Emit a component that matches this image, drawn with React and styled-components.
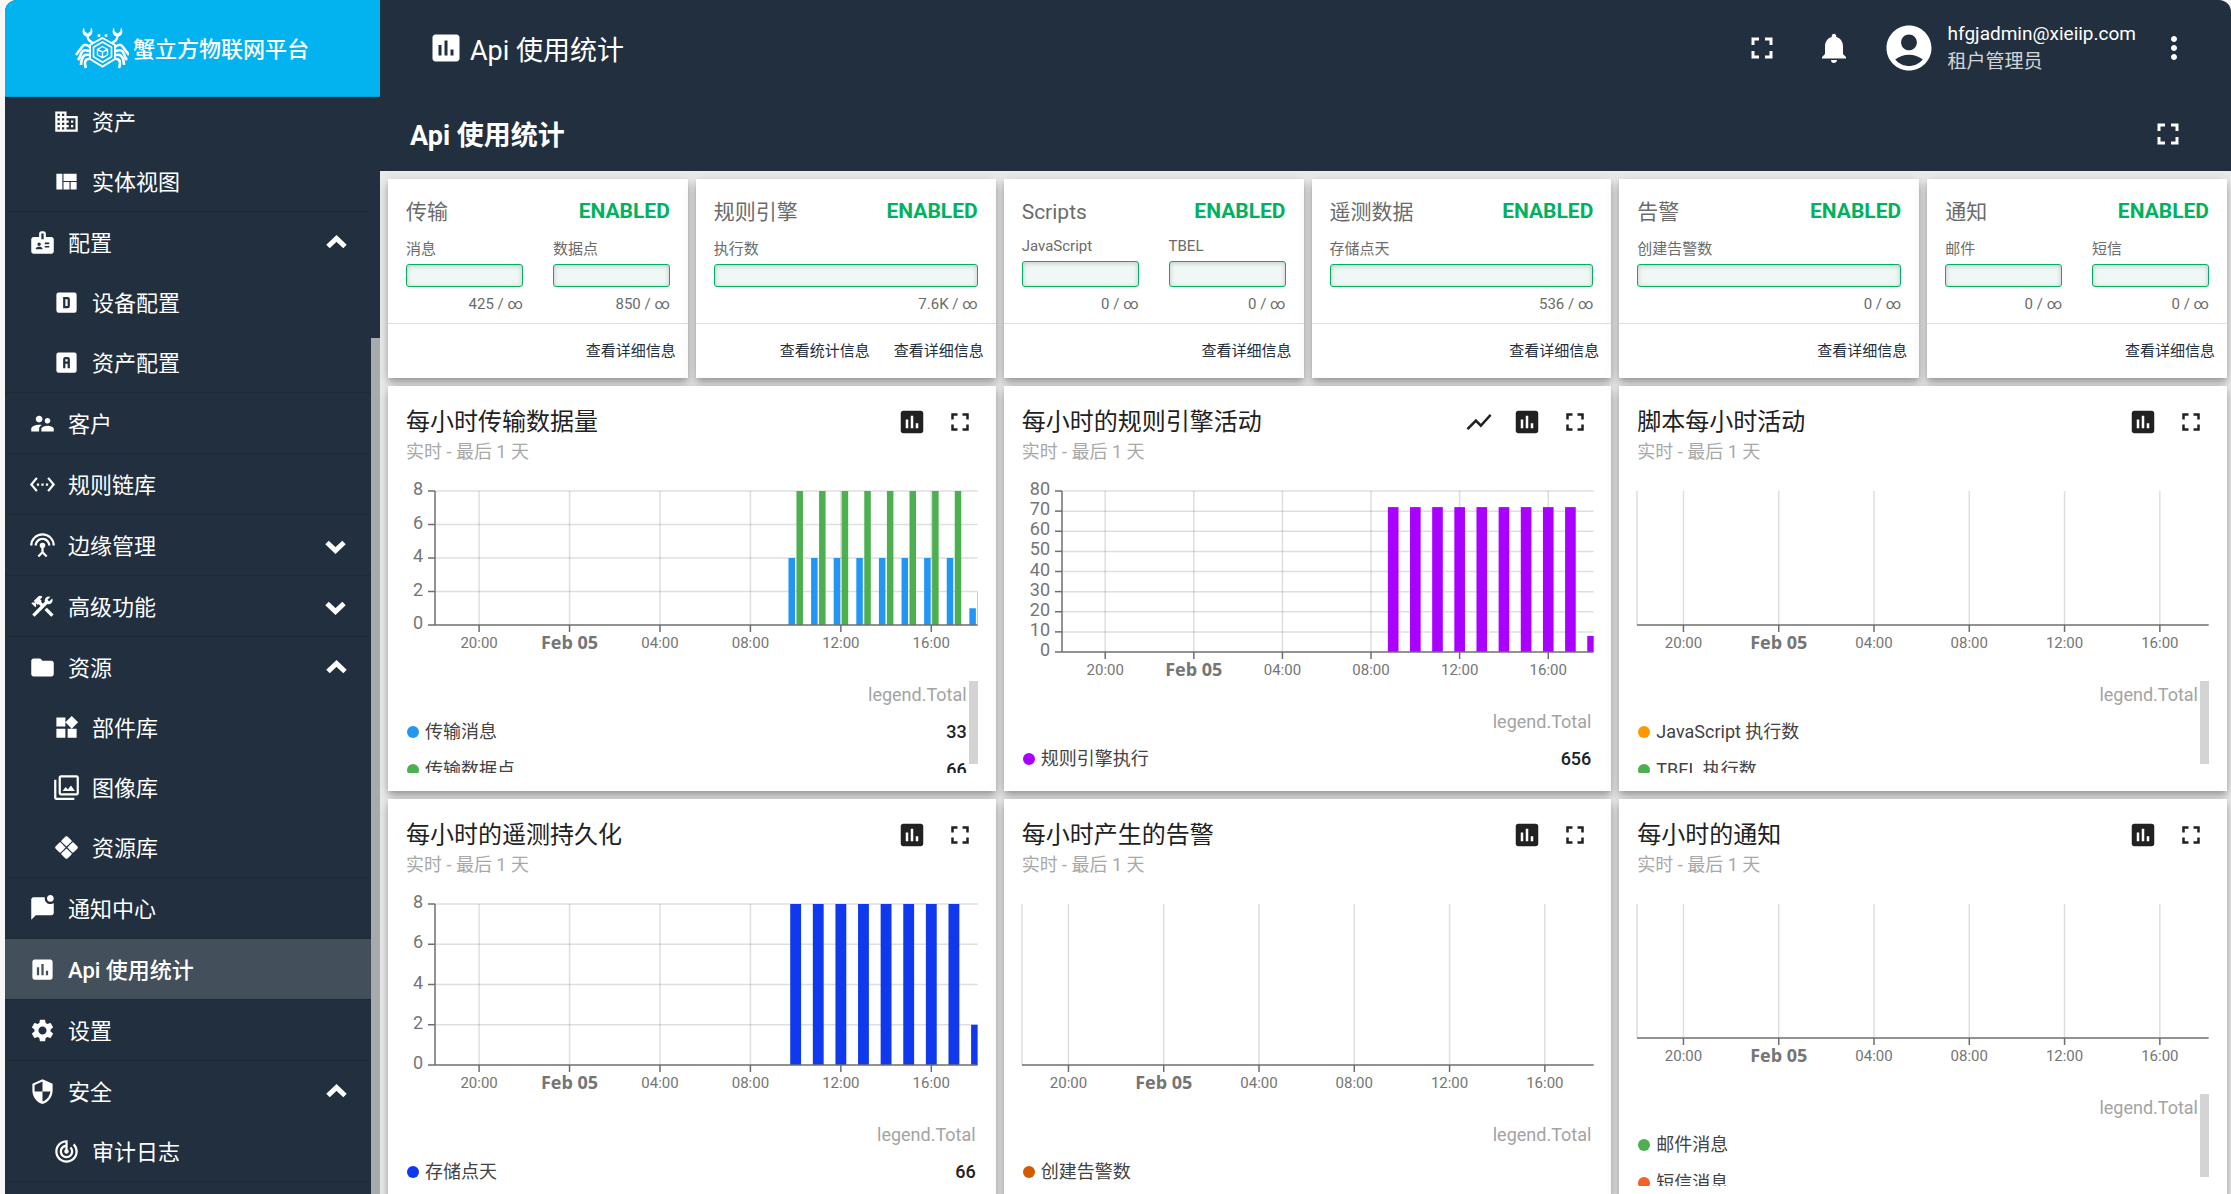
import React from 'react'
import styled, { createGlobalStyle } from 'styled-components'
import {
  MdAccountCircle,
  MdBadge,
  MdConstruction,
  MdDomain,
  MdFilter,
  MdFolder,
  MdFullscreen,
  MdInsertChart,
  MdMoreVert,
  MdNotifications,
  MdSecurity,
  MdSettings,
  MdSettingsEthernet,
  MdSettingsInputAntenna,
  MdShowChart,
  MdSupervisorAccount,
  MdTrackChanges,
  MdViewQuilt,
  MdWidgets,
} from 'react-icons/md'

const GlobalStyle = createGlobalStyle`
  * {
    box-sizing: border-box;
  }
  body {
    margin: 0;
    background: #f7f7f7;
    color: #212121;
    font-family: Roboto, 'Noto Sans CJK SC', sans-serif;
  }
  h1, h2, h3, p, ul {
    margin: 0;
    padding: 0;
    font-weight: 400;
  }
  ul {
    list-style: none;
  }
  button {
    padding: 0;
    border: 0;
    background: none;
    color: inherit;
    font: inherit;
    cursor: pointer;
  }
  a {
    color: inherit;
    text-decoration: none;
  }
  svg {
    display: block;
    flex: none;
  }
`

/* ---------- icons ---------- */

const Svg = ({ d, size = 27 }) => (
  <svg width={size} height={size} viewBox="0 0 24 24" fill="currentColor" aria-hidden="true">
    <path fillRule="evenodd" d={d} />
  </svg>
)

const BOX = 'M5 3H19A2 2 0 0 1 21 5V19A2 2 0 0 1 19 21H5A2 2 0 0 1 3 19V5A2 2 0 0 1 5 3Z'

const DeviceBox = () => <Svg d={`${BOX}M9 7H13A2 2 0 0 1 15 9V15A2 2 0 0 1 13 17H9V7ZM11 9V15H13V9H11Z`} />
const AssetBox = () => <Svg d={`${BOX}M11 7A2 2 0 0 0 9 9V17H11V13H13V17H15V9A2 2 0 0 0 13 7H11ZM11 9H13V11H11V9Z`} />
const Rhombus = () => (
  <Svg d="M12 2c-.4 0-.8.1-1.1.4L7.7 5.6c-.5.5-.5 1 0 1.5L12 11.2l4.300-4.100c.5-.5.5-1 0-1.500l-3.200-3.200C12.800 2.100 12.400 2 12 2ZM7.100 7.700c-.5-.5-1-.5-1.500 0l-3.200 3.200c-.6.6-.6 1.600 0 2.200l3.200 3.200c.5.5 1 .5 1.500 0L11.200 12 7.100 7.700ZM16.900 7.700 12.800 12l4.100 4.300c.5.5 1 .5 1.500 0l3.200-3.200c.6-.6.6-1.600 0-2.200l-3.200-3.200c-.5-.5-1-.5-1.500 0ZM12 12.800l-4.300 4.100c-.5.5-.5 1 0 1.500l3.200 3.200c.6.6 1.600.6 2.200 0l3.200-3.200c.5-.5.5-1 0-1.500L12 12.800Z" />
)
const MessageBadge = () => (
  <Svg d="M22 7V16C22 17.100 21.100 18 20 18H6L2 22V4C2 2.900 2.900 2 4 2H14.100C14 2.300 14 2.700 14 3C14 5.800 16.200 8 19 8C20.100 8 21.200 7.600 22 7ZM16 3C16 4.700 17.300 6 19 6S22 4.700 22 3 20.700 0 19 0 16 1.300 16 3Z" />
)

const Chevron = ({ open }) => (
  <svg width="27" height="27" viewBox="0 0 27 27" fill="none" stroke="currentColor" strokeWidth="5" aria-hidden="true">
    <path d={open ? 'M5 17.500 13.500 9.500 22 17.500' : 'M4 10.500 12.500 18.500 21 10.500'} />
  </svg>
)

const CrabLogo = () => (
  <svg width="54" height="42" viewBox="4 5 54 42" fill="none" stroke="#fff" aria-hidden="true">
    <path strokeWidth="2" d="M31.500 16 44 23v14l-12.500 7.500L19 37V23Z" />
    <path strokeWidth="1.700" d="M31.500 20 40.500 25.200v9.600l-9 5.400-9-5.400v-9.600Z" />
    <path strokeWidth="1.400" d="M31.500 24.500 36.500 27.400v5.400l-5 3-5-3v-5.400ZM26.500 27.400l5 2.800 5-2.800M31.500 30.200v5.600" />
    <g fill="#fff" stroke="none">
      <circle cx="28" cy="13.500" r="1.500" />
      <circle cx="35" cy="13.500" r="1.500" />
      <path d="M13 5.500c-3 4-1 9 3.500 9s6.500-5 3.500-9l-.6 4.100-2.900 2-2.700-2Z" />
      <path d="M43 5.500c-3 4-1 9 3.500 9s6.500-5 3.500-9l-.8 4.100-2.700 2-2.900-2Z" />
    </g>
    <path strokeWidth="2.400" d="M16.500 13c0 5 2 6 5.500 8M46.500 13c0 5-2 6-5.500 8" />
    <path strokeWidth="2.600" d="M19 25c-4-3-6-3-8 0s-4 5-6 8M18 29c-5-2-7 0-8 3s-2 5-3 6M18 33c-4-1-6 1-7 4s-1 4-1 6M18 37c-3 0-4 2-4 4s0 3 1 5" />
    <path strokeWidth="2.600" d="M44 25c4-3 6-3 8 0s4 5 6 8M45 29c5-2 7 0 8 3s2 5 3 6M45 33c4-1 6 1 7 4s1 4 1 6M45 37c3 0 4 2 4 4s0 3-1 5" />
  </svg>
)

/* ---------- data ---------- */

const menu = [
  { children: [
    { label: '资产', icon: <MdDomain size={27} /> },
    { label: '实体视图', icon: <MdViewQuilt size={27} /> },
  ] },
  { label: '配置', icon: <MdBadge size={27} />, open: true, children: [
    { label: '设备配置', icon: <DeviceBox /> },
    { label: '资产配置', icon: <AssetBox /> },
  ] },
  { label: '客户', icon: <MdSupervisorAccount size={27} /> },
  { label: '规则链库', icon: <MdSettingsEthernet size={27} /> },
  { label: '边缘管理', icon: <MdSettingsInputAntenna size={27} />, open: false },
  { label: '高级功能', icon: <MdConstruction size={27} />, open: false },
  { label: '资源', icon: <MdFolder size={27} />, open: true, children: [
    { label: '部件库', icon: <MdWidgets size={27} /> },
    { label: '图像库', icon: <MdFilter size={27} /> },
    { label: '资源库', icon: <Rhombus /> },
  ] },
  { label: '通知中心', icon: <MessageBadge /> },
  { label: 'Api 使用统计', icon: <MdInsertChart size={27} />, active: true },
  { label: '设置', icon: <MdSettings size={27} /> },
  { label: '安全', icon: <MdSecurity size={27} />, open: true, children: [
    { label: '审计日志', icon: <MdTrackChanges size={27} /> },
  ] },
]

const usage = [
  { title: '传输', meters: [['消息', '425'], ['数据点', '850']], links: ['查看详细信息'] },
  { title: '规则引擎', meters: [['执行数', '7.6K']], links: ['查看统计信息', '查看详细信息'] },
  { title: 'Scripts', meters: [['JavaScript', '0'], ['TBEL', '0']], links: ['查看详细信息'] },
  { title: '遥测数据', meters: [['存储点天', '536']], links: ['查看详细信息'] },
  { title: '告警', meters: [['创建告警数', '0']], links: ['查看详细信息'] },
  { title: '通知', meters: [['邮件', '0'], ['短信', '0']], links: ['查看详细信息'] },
]

// values are hourly, counted from the hour in "from"; shift and size are shares of the time axis
const charts = [
  {
    title: '每小时传输数据量',
    max: 8,
    step: 2,
    axis: 29,
    series: [
      { name: '传输消息', color: '#2196f3', total: 33, from: 10, values: [4, 4, 4, 4, 4, 4, 4, 4, 1], shift: -1.32, size: 1.2 },
      { name: '传输数据点', color: '#4caf50', total: 66, from: 10, values: [8, 8, 8, 8, 8, 8, 8, 8, 2], shift: 0.15, size: 1.2 },
    ],
  },
  {
    title: '每小时的规则引擎活动',
    max: 80,
    step: 10,
    axis: 40,
    line: true,
    series: [
      { name: '规则引擎执行', color: '#aa00ff', total: 656, from: 9, values: [72, 72, 72, 72, 72, 72, 72, 72, 72, 8], shift: -1, size: 2 },
    ],
  },
  {
    title: '脚本每小时活动',
    series: [
      { name: 'JavaScript 执行数', color: '#ff9800' },
      { name: 'TBEL 执行数', color: '#4caf50' },
    ],
  },
  {
    title: '每小时的遥测持久化',
    max: 8,
    step: 2,
    axis: 29,
    series: [
      { name: '存储点天', color: '#1039ee', total: 66, from: 10, values: [8, 8, 8, 8, 8, 8, 8, 8, 2], shift: -1, size: 2 },
    ],
  },
  {
    title: '每小时产生的告警',
    series: [{ name: '创建告警数', color: '#d35a00' }],
  },
  {
    title: '每小时的通知',
    series: [
      { name: '邮件消息', color: '#4caf50' },
      { name: '短信消息', color: '#f4602a' },
    ],
  },
]

// the window starts at 18:03 on the day before
const START = -5.95
const at = (hour) => ((hour - START) / 24) * 100
const ticks = [[-4, '20:00'], [0, 'Feb 05'], [4, '04:00'], [8, '08:00'], [12, '12:00'], [16, '16:00']]

/* ---------- components ---------- */

const MenuRow = ({ item, sub }) => {
  const toggles = item.open !== undefined
  return (
    <Row
      as={toggles ? 'button' : 'a'}
      href={toggles ? undefined : '#'}
      aria-expanded={toggles ? item.open : undefined}
      $sub={sub}
      $active={item.active}
    >
      {item.icon}
      <RowLabel>{item.label}</RowLabel>
      {toggles && <Chevron open={item.open} />}
    </Row>
  )
}

const Sidebar = () => (
  <Side>
    <Brand>
      <CrabLogo />
      <BrandName>蟹立方物联网平台</BrandName>
    </Brand>
    <SideBody>
      <Nav>
        <NavList>
          {menu.map((item, i) => (
            <NavGroup key={i}>
              {item.label && <MenuRow item={item} />}
              {item.children && item.children.map((child) => <MenuRow key={child.label} item={child} sub />)}
            </NavGroup>
          ))}
        </NavList>
      </Nav>
      <SideScroll>
        <SideThumb />
      </SideScroll>
    </SideBody>
  </Side>
)

const UsageCard = ({ title, meters, links }) => (
  <Card>
    <UsageBody>
      <UsageHead>
        <UsageTitle>{title}</UsageTitle>
        <Status>ENABLED</Status>
      </UsageHead>
      <Meters>
        {meters.map(([label, value]) => (
          <Meter key={label}>
            <MeterLabel>{label}</MeterLabel>
            <MeterBar />
            <MeterValue>{value} / ∞</MeterValue>
          </Meter>
        ))}
      </Meters>
    </UsageBody>
    <UsageFoot>
      {links.map((link) => (
        <DetailsButton key={link}>{link}</DetailsButton>
      ))}
    </UsageFoot>
  </Card>
)

const YAxis = ({ max, step, width, height }) => {
  const values = []
  for (let v = 0; v <= max; v += step) values.push(v)
  return (
    <AxisSvg width={width} height={height}>
      {values.map((v) => {
        const y = height - (v / max) * height
        return (
          <g key={v}>
            <line x1={width - 7} x2={width} y1={y} y2={y} stroke="#6e6e6e" strokeWidth="1.500" />
            <YLabel x={width - 12} y={y + 4}>{v}</YLabel>
          </g>
        )
      })}
    </AxisSvg>
  )
}

const Plot = ({ chart, height }) => {
  const lines = []
  if (chart.max) for (let v = chart.step; v <= chart.max; v += chart.step) lines.push(v)
  return (
    <PlotSvg height={height}>
      {lines.map((v) => {
        const y = height - (v / chart.max) * height
        return <line key={v} x1="0" x2="100%" y1={y} y2={y} stroke="#dfdfdf" strokeWidth="1.500" />
      })}
      {ticks.map(([hour]) => (
        <line key={hour} x1={`${at(hour)}%`} x2={`${at(hour)}%`} y1="0" y2={height} stroke="#000" strokeOpacity=".13" strokeWidth="1.500" />
      ))}
      <svg width="100%" height={height}>
        {chart.series.map((s) =>
          (s.values || []).map((v, i) => (
            <rect
              key={s.name + i}
              x={`${at(s.from + i) + s.shift}%`}
              width={`${s.size}%`}
              y={height - (v / chart.max) * height}
              height={(v / chart.max) * height}
              fill={s.color}
            />
          )),
        )}
      </svg>
      <line x1="0" x2="0" y1="0" y2={height} stroke={chart.max ? '#6e6e6e' : '#dfdfdf'} strokeWidth="1.500" />
      <line x1="0" x2="100%" y1={height} y2={height} stroke="#6e6e6e" strokeWidth="1.500" />
      {ticks.map(([hour, label]) => (
        <g key={hour}>
          <line x1={`${at(hour)}%`} x2={`${at(hour)}%`} y1={height} y2={height + 7} stroke="#6e6e6e" strokeWidth="1.500" />
          <XLabel x={`${at(hour)}%`} y={height + (hour === 0 ? 24 : 23)} $day={hour === 0}>{label}</XLabel>
        </g>
      ))}
    </PlotSvg>
  )
}

const ChartCard = ({ chart }) => {
  const scrolls = chart.series.length > 1
  const height = scrolls ? 134 : 161
  return (
    <Card $wide>
      <ChartBody>
        <ChartHead>
          <div>
            <ChartTitle>{chart.title}</ChartTitle>
            <ChartPeriod>实时 - 最后 1 天</ChartPeriod>
          </div>
          <ChartTools>
            {chart.line && <button aria-label="折线"><MdShowChart size={30} /></button>}
            <button aria-label="柱状"><MdInsertChart size={30} /></button>
            <button aria-label="全屏"><MdFullscreen size={30} /></button>
          </ChartTools>
        </ChartHead>
        <ChartArea>
          {chart.max && <YAxis max={chart.max} step={chart.step} width={chart.axis} height={height} />}
          <Plot chart={chart} height={height} />
        </ChartArea>
        <LegendBox $scrolls={scrolls}>
          <Legend>
            <thead>
              <tr>
                <td />
                <th scope="col">legend.Total</th>
              </tr>
            </thead>
            <tbody>
              {chart.series.map((s) => (
                <tr key={s.name}>
                  <LegendName>
                    <Dot $color={s.color} />
                    {s.name}
                  </LegendName>
                  <LegendTotal>{s.total}</LegendTotal>
                </tr>
              ))}
            </tbody>
          </Legend>
          {scrolls && <LegendThumb />}
        </LegendBox>
      </ChartBody>
    </Card>
  )
}

const App = () => {
  return (
    <Shell>
      <GlobalStyle />
      <Sidebar />
      <Main>
        <TopBar>
          <MdInsertChart size={36} />
          <PageTitle>Api 使用统计</PageTitle>
          <TopTools>
            <button aria-label="全屏"><MdFullscreen size={36} /></button>
            <button aria-label="通知"><MdNotifications size={36} /></button>
          </TopTools>
          <User>
            <MdAccountCircle size={54} />
            <div>
              <UserMail>hfgjadmin@xieiip.com</UserMail>
              <UserRole>租户管理员</UserRole>
            </div>
          </User>
          <button aria-label="更多"><MdMoreVert size={36} /></button>
        </TopBar>
        <DashboardBar>
          <DashboardTitle>Api 使用统计</DashboardTitle>
          <button aria-label="全屏"><MdFullscreen size={36} /></button>
        </DashboardBar>
        <Board>
          {usage.map((card) => <UsageCard key={card.title} {...card} />)}
          {charts.map((chart) => <ChartCard key={chart.title} chart={chart} />)}
        </Board>
      </Main>
    </Shell>
  )
}

/* ---------- styles ---------- */

const Shell = styled.div`
  display: flex;
  height: 100vh;
  padding-left: 5px;
  overflow: hidden;
`

const Side = styled.aside`
  display: flex;
  flex: none;
  flex-direction: column;
  width: 375px;
  overflow: hidden;
  border-top-left-radius: 12px;
  background: #212f3f;
  color: #fff;
`

const Brand = styled.div`
  display: flex;
  flex: none;
  align-items: center;
  gap: 4px;
  height: 97px;
  padding-left: 70px;
  border-bottom: 1px solid #069dd5;
  background: #02b3f0;
`

const BrandName = styled.span`
  padding-bottom: 2px;
  font-size: 22px;
  font-weight: 500;
`

const SideBody = styled.div`
  display: flex;
  flex: 1;
  min-height: 0;
`

const Nav = styled.nav`
  flex: 1;
  overflow: hidden;
`

// the menu is scrolled a little past the top of its first row
const NavList = styled.ul`
  margin-top: -6px;
`

const NavGroup = styled.li`
  border-bottom: 1px solid #1c2a37;
`

const Row = styled.a`
  display: flex;
  align-items: center;
  gap: 12px;
  width: 100%;
  height: 60px;
  padding: 0 21px 0 ${({ $sub }) => ($sub ? 48 : 24)}px;
  background: ${({ $active }) => ($active ? '#434f5b' : 'transparent')};
  font-size: 22px;
  font-weight: ${({ $active }) => ($active ? 500 : 400)};
  text-align: left;
`

const RowLabel = styled.span`
  flex: 1;
  padding-bottom: 3px;
`

const SideScroll = styled.div`
  display: flex;
  align-items: flex-end;
  width: 9px;
`

const SideThumb = styled.div`
  width: 100%;
  height: 78%;
  background: #a7abae;
`

const Main = styled.main`
  display: flex;
  flex: 1;
  flex-direction: column;
  min-width: 0;
`

const TopBar = styled.header`
  display: flex;
  flex: none;
  align-items: center;
  height: 96px;
  padding: 0 39px 0 48px;
  border-top-right-radius: 12px;
  background: #212f3f;
  color: #fff;
`

const PageTitle = styled.h1`
  margin-left: 6px;
  font-size: 27px;
`

const TopTools = styled.div`
  display: flex;
  gap: 36px;
  margin-left: auto;
`

const User = styled.div`
  display: flex;
  align-items: center;
  gap: 12px;
  margin: 0 20px 0 30px;
`

const UserMail = styled.p`
  font-size: 19px;
  line-height: 28px;
`

const UserRole = styled.p`
  font-size: 19px;
  line-height: 28px;
  opacity: 0.8;
`

const DashboardBar = styled.div`
  display: flex;
  flex: none;
  align-items: center;
  justify-content: space-between;
  height: 75px;
  padding: 0 45px 0 30px;
  background: #212f3f;
  color: #fff;
`

const DashboardTitle = styled.h2`
  font-size: 27px;
  font-weight: 700;
`

const Board = styled.div`
  display: grid;
  flex: 1;
  grid-template-columns: repeat(6, minmax(0, 1fr));
  align-content: start;
  gap: 8px;
  min-height: 0;
  padding: 8px 4px 0 8px;
  overflow: hidden;
  background: #ebebeb;
`

const Card = styled.section`
  grid-column: span ${({ $wide }) => ($wide ? 2 : 1)};
  background: #fff;
  box-shadow: 0 3px 6px -1px rgba(0, 0, 0, 0.2), 0 6px 8px 0 rgba(0, 0, 0, 0.14), 0 2px 15px 0 rgba(0, 0, 0, 0.12);
`

const UsageBody = styled.div`
  display: flex;
  flex-direction: column;
  gap: 10px;
  height: 145px;
  padding: 18px 18px 10px;
  border-bottom: 1px solid #dedede;
`

const UsageHead = styled.div`
  display: flex;
  justify-content: space-between;
  height: 30px;
`

const UsageTitle = styled.h3`
  color: #6b6b6b;
  font-size: 21px;
  line-height: 30px;
`

const Status = styled.span`
  color: #00b260;
  font-size: 21px;
  font-weight: 700;
  line-height: 28px;
`

const Meters = styled.div`
  display: flex;
  flex: 1;
  gap: 30px;
`

const Meter = styled.div`
  display: flex;
  flex: 1;
  flex-direction: column;
  color: #6b6b6b;
  font-size: 15px;
`

const MeterLabel = styled.span`
  margin-bottom: 6px;
`

const MeterBar = styled.div`
  flex: 1;
  border: 1px solid #00b260;
  border-radius: 3px;
  background: #f0f8f6;
  box-shadow: inset 0 1px 5px rgba(0, 0, 0, 0.2);
`

const MeterValue = styled.span`
  margin-top: 8px;
  line-height: 18px;
  text-align: right;
`

const UsageFoot = styled.div`
  display: flex;
  align-items: center;
  justify-content: flex-end;
  gap: 24px;
  height: 54px;
  padding: 0 12px 4px 0;
`

const DetailsButton = styled.button`
  color: #212f3f;
  font-size: 15px;
`

const ChartBody = styled.div`
  padding: 18px;
`

const ChartHead = styled.div`
  display: flex;
  justify-content: space-between;
  margin-bottom: 27px;
`

const ChartTitle = styled.h3`
  font-size: 24px;
  line-height: 36px;
`

const ChartPeriod = styled.p`
  color: #a8a8a8;
  font-size: 18px;
  line-height: 24px;
`

const ChartTools = styled.div`
  display: flex;
  align-items: center;
  gap: 18px;
  height: 36px;
  padding-right: 3px;
`

const ChartArea = styled.div`
  display: flex;
  margin-bottom: 56px;
`

const AxisSvg = styled.svg`
  overflow: visible;
`

const PlotSvg = styled.svg`
  flex: 1;
  min-width: 0;
  overflow: visible;
`

const YLabel = styled.text`
  fill: #757575;
  font-size: 18px;
  text-anchor: end;
`

const XLabel = styled.text`
  fill: #757575;
  font-family: ${({ $day }) => ($day ? "'Open Sans', sans-serif" : 'Roboto, sans-serif')};
  font-size: ${({ $day }) => ($day ? 18 : 15)}px;
  font-weight: ${({ $day }) => ($day ? 700 : 400)};
  text-anchor: middle;
`

const LegendBox = styled.div`
  display: flex;
  height: ${({ $scrolls }) => ($scrolls ? 92 : 65)}px;
  overflow: ${({ $scrolls }) => ($scrolls ? 'hidden' : 'visible')};
`

const Legend = styled.table`
  flex: 1;
  align-self: flex-start;
  border-collapse: collapse;
  font-size: 18px;
  line-height: 28px;

  th {
    height: 32px;
    padding: 0 2px 0 0;
    color: #a3a3a3;
    font-weight: 400;
    text-align: right;
    vertical-align: top;
  }
`

const LegendName = styled.td`
  display: flex;
  align-items: center;
  gap: 6px;
  height: 38px;
  padding: 0 0 0 1px;
  color: #424242;
`

const LegendTotal = styled.td`
  padding: 0 2px 0 0;
  font-weight: 500;
  text-align: right;
`

const Dot = styled.span`
  width: 12px;
  height: 12px;
  border-radius: 50%;
  background: ${({ $color }) => $color};
`

const LegendThumb = styled.div`
  width: 9px;
  height: 83px;
  background: #d4d4d4;
`

export default App
